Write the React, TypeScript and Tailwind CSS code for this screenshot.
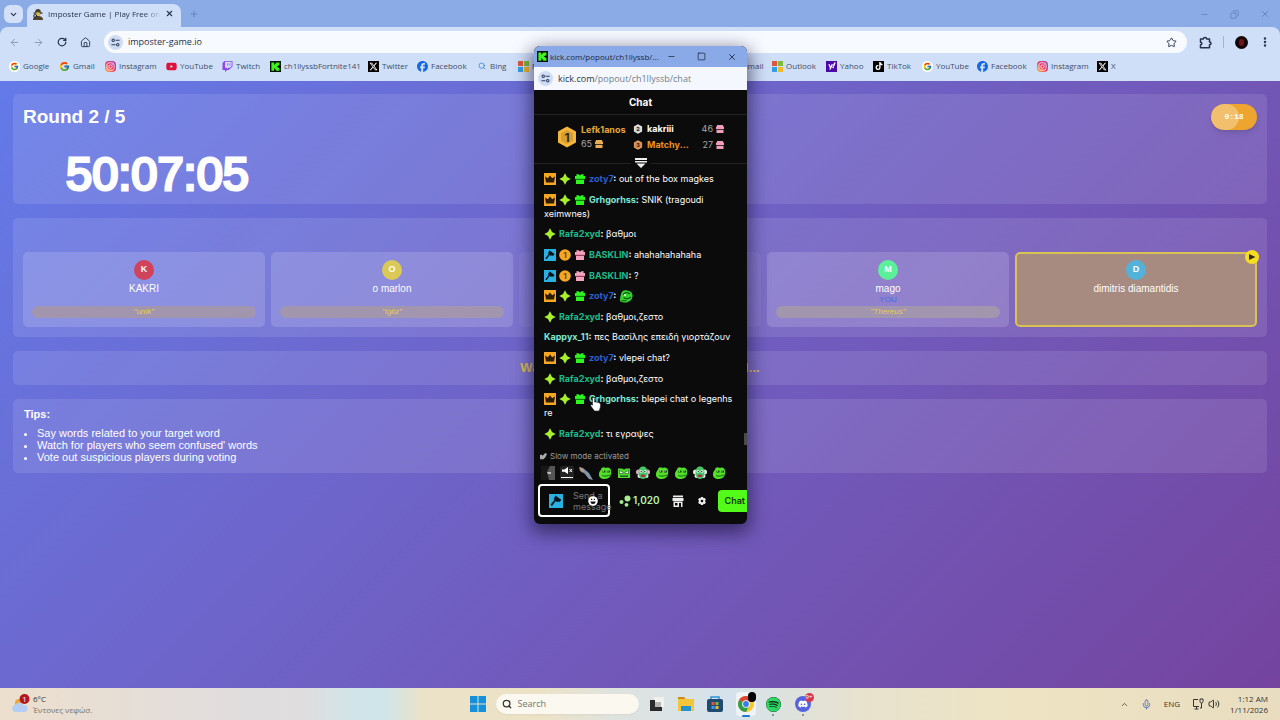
import type { ReactNode } from 'react';
import { ArrowLeft, ArrowRight, ChevronDown, ChevronUp, Copy, EllipsisVertical, House, Mic, Minus, Plus, RotateCw, Search, Square, Star, Volume2, X } from 'lucide-react';
import { FaDiscord, FaFacebook, FaInstagram, FaSpotify, FaTwitch, FaXTwitter, FaYahoo, FaTiktok, FaYoutube } from 'react-icons/fa6';
import { FcGoogle } from 'react-icons/fc';

/* Logos */
const KickLogo = () => (
  <svg viewBox="0 0 12 12" className="size-[11px] shrink-0">
    <rect width="12" height="12" fill="#061206" />
    <path d="M1.5 1.5h3v2.4h1V2.7h1.2V1.5h3.6v3H9v1H7.8v1H9v1h1.3v3H6.7V9.3H5.5V8.1h-1v2.4h-3z" fill="#3df51c" />
  </svg>
);

const MicrosoftLogo = () => (
  <svg viewBox="0 0 11 11" className="size-[11px] shrink-0">
    <path d="M0 0h5v5H0z" fill="#e2553b" />
    <path d="M6 0h5v5H6z" fill="#7fba3c" />
    <path d="M0 6h5v5H0z" fill="#2fa0e8" />
    <path d="M6 6h5v5H6z" fill="#f5b829" />
  </svg>
);

const GoogleLogo = () => (
  <span className="flex size-[11px] shrink-0 items-center justify-center rounded-full bg-white">
    <FcGoogle size={9} />
  </span>
);

const InstagramLogo = () => (
  <span className="flex size-[11px] shrink-0 items-center justify-center rounded-sm bg-linear-to-tr from-[#fdb236] via-[#e8305f] to-[#a02fc0] text-white">
    <FaInstagram size={9} />
  </span>
);

const DarkLogo = ({ children, color = 'bg-black' }: { children: ReactNode; color?: string }) => (
  <span className={`flex size-[11px] shrink-0 items-center justify-center text-white ${color}`}>{children}</span>
);

const TuneIcon = () => (
  <svg viewBox="0 0 12 12" className="size-[9px]" fill="none" stroke="#33425e" strokeWidth="1.4">
    <circle cx="3" cy="3" r="1.6" />
    <path d="M6 3h5.5M.5 9H6" />
    <circle cx="9" cy="9" r="1.6" />
  </svg>
);

const PuzzleIcon = () => (
  <svg viewBox="0 0 13 13" className="size-[13px]" fill="none" stroke="currentColor" strokeWidth="1.5" strokeLinejoin="round">
    <path d="M1.500 3h2.800c0-2 3.400-2 3.400 0h2.800v3c2 0 2 2.800 0 2.800v3h-9V8.800c1.700 0 1.700-2.600 0-2.600z" />
  </svg>
);

const DetectiveIcon = () => (
  <svg viewBox="0 0 12 12" className="size-3 shrink-0">
    <path d="M3 4.500C3 2 4.500 1 6 1s3 1 3 3.500z" fill="#473d2b" />
    <path d="M1.500 4.500h9v1.200h-9z" fill="#2f291e" />
    <circle cx="6" cy="6.500" r="2.200" fill="#e3b83b" />
    <path d="M1 12c0-3 2-4 5-4s5 1 5 4z" fill="#51442d" />
    <circle cx="3.200" cy="8" r="1.500" fill="none" stroke="#222" />
  </svg>
);

/* Bookmarks bar */
type Bookmark = { name: string; icon: ReactNode; width: string };

const leftBookmarks: Bookmark[] = [
  { name: 'Google', icon: <GoogleLogo />, width: 'w-[50px]' },
  { name: 'Gmail', icon: <FcGoogle size={11} className="shrink-0" />, width: 'w-[46px]' },
  { name: 'Instagram', icon: <InstagramLogo />, width: 'w-[61px]' },
  { name: 'YouTube', icon: <FaYoutube size={11} className="shrink-0 text-[#e0123a]" />, width: 'w-[56px]' },
  { name: 'Twitch', icon: <FaTwitch size={11} className="shrink-0 text-[#8b45e8]" />, width: 'w-[48px]' },
  { name: 'ch1llyssbFortnite141', icon: <KickLogo />, width: 'w-[98px]' },
  { name: 'Twitter', icon: <DarkLogo><FaXTwitter size={9} /></DarkLogo>, width: 'w-[49px]' },
  { name: 'Facebook', icon: <FaFacebook size={11} className="shrink-0 text-[#1768e5]" />, width: 'w-[60px]' },
  { name: 'Bing', icon: <Search size={8} className="mx-[1px] shrink-0 text-[#2b6fd0]" />, width: 'w-[41px]' },
  { name: 'Microsoft', icon: <MicrosoftLogo />, width: 'w-[58px]' },
];

const rightBookmarks: Bookmark[] = [
  { name: 'Hotmail', icon: <MicrosoftLogo />, width: 'w-[52px]' },
  { name: 'Outlook', icon: <MicrosoftLogo />, width: 'w-[54px]' },
  { name: 'Yahoo', icon: <DarkLogo color="bg-[#4a0aa8]"><FaYahoo size={8} /></DarkLogo>, width: 'w-[47px]' },
  { name: 'TikTok', icon: <DarkLogo><FaTiktok size={8} /></DarkLogo>, width: 'w-[49px]' },
  { name: 'YouTube', icon: <GoogleLogo />, width: 'w-[55px]' },
  { name: 'Facebook', icon: <FaFacebook size={11} className="shrink-0 text-[#1768e5]" />, width: 'w-[60px]' },
  { name: 'Instagram', icon: <InstagramLogo />, width: 'w-[60px]' },
  { name: 'X', icon: <DarkLogo><FaXTwitter size={9} /></DarkLogo>, width: 'w-[30px]' },
];

const BookmarkList = ({ items }: { items: Bookmark[] }) => (
  <div className="flex">
    {items.map((item) => (
      <a key={item.name} href="#" className={`flex shrink-0 items-center gap-[3px] whitespace-nowrap ${item.width}`}>
        {item.icon}
        {item.name}
      </a>
    ))}
  </div>
);

const BrowserHeader = () => (
  <header className="bg-[#8babe6] text-[#27324a]">
    <div className="flex h-[27px] items-end pl-1">
      <button aria-label="Search tabs" className="mb-1 flex h-[18px] w-[19px] items-center justify-center rounded-md bg-[#d3e0f8]">
        <ChevronDown size={9} strokeWidth={3} />
      </button>
      <div className="ml-1 flex h-[23px] w-[154px] items-center gap-1 rounded-t-lg bg-[#d0dff8] px-[5px] pb-1 text-[8px]">
        <DetectiveIcon />
        <span className="w-[113px] whitespace-nowrap mask-r-from-85%">Imposter Game | Play Free onli</span>
        <button aria-label="Close tab"><X size={9} strokeWidth={3} /></button>
      </div>
      <button aria-label="New tab" className="mb-2 ml-2 text-[#5c7db8]"><Plus size={10} /></button>
      <div className="mr-[10px] mb-2 ml-auto flex items-center gap-[21px] text-[#5f7fb6]">
        <button aria-label="Minimize"><Minus size={9} /></button>
        <button aria-label="Restore"><Copy size={9} className="-scale-x-100" /></button>
        <button aria-label="Close"><X size={10} /></button>
      </div>
    </div>
    <div className="rounded-t-lg bg-[#d0dff8] pt-1">
      <div className="flex items-center pr-[9px] pl-[9px]">
        <div className="flex w-[95px] items-center gap-[13px]">
          <button aria-label="Back"><ArrowLeft size={11} className="text-[#8795b2]" /></button>
          <button aria-label="Forward"><ArrowRight size={11} className="text-[#8795b2]" /></button>
          <button aria-label="Reload"><RotateCw size={10} strokeWidth={3} /></button>
          <button aria-label="Home"><House size={11} strokeWidth={2} /></button>
        </div>
        <div className="flex h-[22px] flex-1 items-center gap-[5px] rounded-full bg-[#f7faff] pr-[10px] pl-1">
          <span className="flex size-[15px] items-center justify-center rounded-full bg-[#cfdcf3]"><TuneIcon /></span>
          <input aria-label="Address" defaultValue="imposter-game.io" className="min-w-0 flex-1 bg-transparent text-[9px] outline-none" />
          <button aria-label="Bookmark"><Star size={11} /></button>
        </div>
        <button aria-label="Extensions" className="ml-3"><PuzzleIcon /></button>
        <span className="mx-[11px] h-3 w-px bg-[#a0b4da]" />
        <button aria-label="Profile" className="flex size-[13px] items-center justify-center rounded-full bg-[#120506]">
          <span className="h-[7px] w-[5px] rounded-full bg-[#6d1420]" />
        </button>
        <button aria-label="Menu" className="ml-[11px]"><EllipsisVertical size={12} strokeWidth={3} /></button>
      </div>
      <nav className="flex h-7 items-center pb-[2px] pl-[9px] text-[8px] text-[#414d66]">
        <BookmarkList items={leftBookmarks} />
        <div className="w-36 shrink" />
        <BookmarkList items={rightBookmarks} />
      </nav>
    </div>
  </header>
);

/* Game page */
type Player = { initial: string; name: string; color: string; word?: string; you?: boolean; active?: boolean };

const players: Player[] = [
  { initial: 'K', name: 'KAKRI', color: 'bg-[#d1435b]', word: '"unik"' },
  { initial: 'O', name: 'o marlon', color: 'bg-[#dac957]', word: '"igliz"' },
  { initial: '', name: '', color: 'bg-[#8a7fd0]' },
  { initial: 'M', name: 'mago', color: 'bg-[#5df09a]', word: '"Thereus"', you: true },
  { initial: 'D', name: 'dimitris diamantidis', color: 'bg-[#52b2da]', active: true },
];

const cardColor = (player: Player) => {
  if (player.active) return 'border-[#d8c155] bg-[#a78a80]';
  return player.name ? 'border-transparent bg-white/15' : 'border-transparent bg-white/5';
};

const PlayerCard = ({ player }: { player: Player }) => (
  <div className={`relative flex h-[75px] flex-col items-center rounded-[5px] border-2 px-[7px] pt-[6px] ${cardColor(player)}`}>
    <span className={`flex size-5 items-center justify-center rounded-full text-[9px] font-bold ${player.color}`}>{player.initial}</span>
    <span className="mt-[2px] text-[10px] leading-[14px]">{player.name}</span>
    <span className="h-[10px] text-[8px] leading-[8px] text-[#3f6be8]">{player.you && 'YOU'}</span>
    {player.word && <span className="h-3 w-full rounded-full bg-[#a196ae] text-center text-[8px] leading-[12px] text-[#e4cf48] italic">{player.word}</span>}
    {player.active && (
      <span className="absolute -top-1 -right-1 flex size-[14px] items-center justify-center rounded-full bg-[#f7dd21]">
        <svg viewBox="0 0 8 8" className="size-2"><path d="M1 1l6.500 3L1 7z" fill="#2e2a15" /></svg>
      </span>
    )}
  </div>
);

const Game = () => (
  <main className="flex flex-1 flex-col gap-[14px] bg-linear-135 from-[#637ae8] to-[#74449f] px-[13px] pt-[13px] font-['Liberation_Sans',sans-serif] text-white">
    <section className="flex h-[110px] items-start justify-between rounded-[5px] bg-white/10 p-[10px]">
      <div>
        <h1 className="text-[19px] leading-[25px] font-bold">Round 2 / 5</h1>
        <p className="mt-[15px] ml-[43px] text-[47px] leading-[60px] [-webkit-text-stroke:3px_white]">50:07:05</p>
      </div>
      <div className="relative flex h-[26px] w-[46px] items-center justify-center overflow-hidden rounded-full bg-[#eda52f] shadow-md">
        <span className="absolute inset-y-0 left-0 w-7 rounded-full bg-white/30" />
        <span className="relative font-['Liberation_Mono',monospace] text-[8px] font-bold">0:18</span>
      </div>
    </section>

    <section className="rounded-[5px] bg-white/10 px-[10px] pt-[34px] pb-[10px]">
      <div className="grid grid-cols-5 gap-[6px]">
        {players.map((player) => <PlayerCard key={player.color} player={player} />)}
      </div>
    </section>

    <section className="flex h-[34px] items-center justify-center rounded-[5px] bg-white/10 text-[13px] font-bold text-[#dcc04c]">
      Waiting for dimitris diamantidis word...
    </section>

    <section className="h-[74px] rounded-[5px] bg-white/10 px-[11px] pt-2 text-[11px]">
      <h2 className="leading-[14px] font-bold">Tips:</h2>
      <ul className="mt-[6px] list-disc pl-[13px] leading-[12px]">
        <li>Say words related to your target word</li>
        <li>Watch for players who seem confused' words</li>
        <li>Vote out suspicious players during voting</li>
      </ul>
    </section>
  </main>
);

/* Chat badges */
const CrownBadge = () => (
  <svg viewBox="0 0 12 12" className="size-3">
    <rect width="12" height="12" fill="#f5a623" />
    <path d="M1 3.500L3.800 5.300 6 2.500l2.200 2.800L11 3.500 10 9.500H2z" fill="#2b1a05" />
  </svg>
);

const StarBadge = () => (
  <svg viewBox="0 0 12 12" className="size-3">
    <path d="M6 .3l2 3.700L11.700 6 8 8 6 11.700 4 8 .3 6 4 4z" fill="#a8f02a" />
  </svg>
);

const GiftBadge = ({ color = '#2df51f', band = '#118c12' }: { color?: string; band?: string }) => (
  <svg viewBox="0 0 12 12" className="size-3">
    <path d="M2.500 1l2.500.5 1 1 1-1L9.500 1v2h1.500v3H1V3h1.500z" fill={color} />
    <path d="M2 6.800h8V11H2z" fill={color} />
    <path d="M1.500 5.800h9v1h-9z" fill={band} />
  </svg>
);

const ModBadge = () => (
  <svg viewBox="0 0 12 12" className="size-full">
    <rect width="12" height="12" fill="#2bb0e2" />
    <path d="M5.500 1.200l5 3.800-1.400 2-1.300-.8-.8.8L5.700 6 2.600 10.300 1.300 9.200 4.800 5l-.8-.7z" fill="#08141c" />
  </svg>
);

const CoinBadge = () => (
  <svg viewBox="0 0 12 12" className="size-3">
    <circle cx="6" cy="6" r="5.800" fill="#f5a623" />
    <text x="6" y="8.800" fontSize="8" fontWeight="700" textAnchor="middle" fill="#70420c">1</text>
  </svg>
);

const badgeIcons = {
  crown: <CrownBadge />,
  star: <StarBadge />,
  gift: <GiftBadge />,
  mod: <ModBadge />,
  coin: <CoinBadge />,
  pink: <GiftBadge color="#f3a3bd" band="#b5476b" />,
};

type Badge = keyof typeof badgeIcons;

const vip: Badge[] = ['crown', 'star', 'gift'];
const moderator: Badge[] = ['mod', 'coin', 'pink'];

/* Emotes */
const Frog = () => (
  <svg viewBox="0 0 14 14" className="size-[14px]">
    <path d="M3 3.500C3.500.8 6.500.8 7.500 2 10 .5 13.500 2 13.200 6c0 4-2.200 7-6.200 7-3.500.3-6-1.500-6-4.500C.8 6.500 2 5 3 3.500z" fill="#54e02a" />
    <path d="M4.500 4.500h3v2h-3zM9 4.500h3v2H9z" fill="#174f10" />
    <path d="M5 4.500h1v1H5zM9.500 4.500h1v1h-1z" fill="#f0fbe8" />
    <path d="M4 9.500c3 1 5 .8 8-.5" stroke="#1c7a16" strokeWidth="1.200" fill="none" />
  </svg>
);

const FrogBlock = () => (
  <svg viewBox="0 0 14 14" className="size-[14px]">
    <path d="M1 2.500h4l2 1 2-1h4V12H1z" fill="#4fd931" />
    <path d="M2.500 4.500L6 6v1.500H2.500zM11.500 4.500L8 6v1.500h3.500z" fill="#f0fbe8" stroke="#17521a" strokeWidth=".6" />
    <path d="M3 9.500h8v1.300H3z" fill="#154a15" />
  </svg>
);

const Clown = ({ hair = '#e8aacb' }: { hair?: string }) => (
  <svg viewBox="0 0 14 14" className="size-[14px]">
    <circle cx="2.500" cy="6" r="2.500" fill={hair} />
    <circle cx="11.500" cy="6" r="2.500" fill={hair} />
    <circle cx="3.500" cy="10" r="2" fill="#eef0ee" />
    <circle cx="10.500" cy="10" r="2" fill="#eef0ee" />
    <path d="M7 .5c3 0 4.500 2.500 4.500 6S10 13 7 13s-4.500-3-4.500-6.500S4 .5 7 .5z" fill="#47c765" />
    <ellipse cx="5" cy="5.500" rx="1.500" ry="1.200" fill="#fff" />
    <ellipse cx="9" cy="5.500" rx="1.500" ry="1.200" fill="#fff" />
    <circle cx="5.200" cy="5.600" r=".7" />
    <circle cx="8.800" cy="5.600" r=".7" />
    <ellipse cx="7" cy="9.800" rx="2.500" ry="1.300" fill="#b3264a" />
  </svg>
);

const FrogCup = () => (
  <svg viewBox="0 0 14 14" className="inline size-[14px] align-[-4px]">
    <path d="M2 5C3 1 6 1 8 1.500c4 .5 6 3 5.500 6C13 11 10 13.500 6 13.500 3 13.500.5 12.500 1 11c.2-2 .3-4 1-6z" fill="#35d32e" />
    <path d="M4 5.500c2-2 5-2 7-.5M4.500 8.500c2 1.500 5 1.500 7.500-.5M2.500 11.500c2 .5 3 .5 5-.3" stroke="#0c5c14" strokeWidth="1.200" fill="none" />
    <circle cx="6" cy="6" r="1" fill="#eafbe4" />
  </svg>
);

type Message = { user: string; color: string; badges: Badge[]; text: ReactNode };

const blue = 'text-[#2c5fd0]';
const teal = 'text-[#7ee8d2]';
const green = 'text-[#1cbc8c]';

const messages: Message[] = [
  { user: 'zoty7', color: blue, badges: vip, text: 'out of the box magkes' },
  { user: 'Grhgorhss', color: teal, badges: vip, text: 'SNIK (tragoudi xeimwnes)' },
  { user: 'Rafa2xyd', color: green, badges: ['star'], text: 'βαθμοι' },
  { user: 'BASKLIN', color: green, badges: moderator, text: 'ahahahahahaha' },
  { user: 'BASKLIN', color: green, badges: moderator, text: '?' },
  { user: 'zoty7', color: blue, badges: vip, text: <FrogCup /> },
  { user: 'Rafa2xyd', color: green, badges: ['star'], text: 'βαθμοι,ζεστο' },
  { user: 'Kappyx_11', color: teal, badges: [], text: 'πες Βασίλης επειδή γιορτάζουν' },
  { user: 'zoty7', color: blue, badges: vip, text: 'vlepei chat?' },
  { user: 'Rafa2xyd', color: green, badges: ['star'], text: 'βαθμοι,ζεστο' },
  { user: 'Grhgorhss', color: teal, badges: vip, text: 'blepei chat o legenhs re' },
  { user: 'Rafa2xyd', color: green, badges: ['star'], text: 'τι εγραψες' },
];

const Hexagon = ({ size, fill, label }: { size: string; fill: string; label: string }) => (
  <svg viewBox="0 0 20 22" className={`shrink-0 ${size}`}>
    <path d="M10 .5l9 5v11l-9 5-9-5v-11z" fill={fill} />
    <path d="M10 4l6 3.300v7.400L10 18l-6-3.300V7.300z" fill="#000" opacity=".12" />
    <text x="10" y="15.500" fontSize="12" fontWeight="700" textAnchor="middle" fill="#33291b">{label}</text>
  </svg>
);

const GiftCount = ({ count, color }: { count: number; color: string }) => (
  <span className="flex items-center gap-[3px] font-normal text-[#a7a7a7]">
    {count}
    <svg viewBox="0 0 8 8" className="size-2"><path d="M1 0h6v1.500h1V4H0V1.500h1zM.5 4.800h7V8h-7z" fill={color} /></svg>
  </span>
);

const Leaderboard = () => (
  <div className="flex h-11 items-center border-t border-[#222] pr-[23px] pl-[23px] text-[9px] leading-[14px] font-bold">
    <Hexagon size="h-[22px] w-5" fill="#f5b53a" label="1" />
    <div className="ml-[4px] w-[52px]">
      <div className="text-[#e5a83a]">Lefk1anos</div>
      <GiftCount count={65} color="#e8ad55" />
    </div>
    <div className="flex-1">
      <div className="flex items-center gap-1 leading-4">
        <Hexagon size="h-[10px] w-[10px]" fill="#e6e6e6" label="2" />
        <span className="flex-1">kakriii</span>
        <GiftCount count={46} color="#f09dbb" />
      </div>
      <div className="flex items-center gap-1 leading-4">
        <Hexagon size="h-[10px] w-[10px]" fill="#e89a5b" label="3" />
        <span className="flex-1 text-[#ee9220]">Matchy...</span>
        <GiftCount count={27} color="#f09dbb" />
      </div>
    </div>
  </div>
);

const ChatFooter = () => (
  <div className="overflow-hidden px-1 pb-[7px]">
    <div className="flex items-center gap-[3px] pl-[2px] text-[8px] leading-[14px] text-[#9b9b9b]">
      <svg viewBox="0 0 8 8" className="size-[7px]"><path d="M0 2h2l1 1 3-3 2 1-2 4-2 2H0z" fill="#aaa" /></svg>
      Slow mode activated
    </div>
    <div className="mt-[3px] flex gap-[5px] pl-[3px]">
      <svg viewBox="0 0 14 14" className="size-[14px]"><rect width="14" height="14" fill="#555" /><path d="M0 0h9L6 6l2 8H0z" fill="#171717" /><path d="M6 6h4v2H7z" fill="#bbb" /></svg>
      <svg viewBox="0 0 14 14" className="size-[14px]"><rect width="14" height="14" rx="2" fill="#222" /><path d="M2 3.500h2.500L8 1v7L4.500 5.800H2z" fill="#fff" /><path d="M9.500 3l2.500 3M12 3L9.500 6M1 11.500h12" stroke="#fff" /></svg>
      <svg viewBox="0 0 14 14" className="size-[14px]"><path d="M0 1l4 1 6 5 4 7-4-1-5-6-4-2z" fill="#8294a4" /><path d="M1 1l4 3-1 3-3-3z" fill="#b99a85" /></svg>
      <Frog /><FrogBlock /><Clown /><Frog /><Frog /><Clown hair="#eef0ee" /><Frog />
    </div>
    <div className="mt-1 flex h-[33px] items-center">
      <div className="relative flex h-full w-[72px] shrink-0 items-center rounded border-2 border-white pl-[9px]">
        <span className="size-[14px] shrink-0"><ModBadge /></span>
        <textarea aria-label="Send a message" rows={2} placeholder="Send a message" className="ml-[10px] w-[46px] shrink-0 resize-none overflow-hidden bg-transparent text-[9px] leading-[11px] outline-none placeholder:text-[#777]" />
        <button aria-label="Emotes" className="absolute top-[10px] left-12">
          <svg viewBox="0 0 10 10" className="size-[10px]"><circle cx="5" cy="5" r="4.800" fill="#fff" /><path d="M2.500 5.500h5a2.500 2.500 0 01-5 0M3 2.800h1.200V4H3zM5.800 2.800H7V4H5.800z" fill="#111" /></svg>
        </button>
      </div>
      <button className="ml-[9px] flex shrink-0 items-center gap-[2px] text-[10px] font-semibold text-[#b9f2a9]">
        <svg viewBox="0 0 12 12" className="size-3"><circle cx="8.500" cy="3.500" r="3" fill="#a5f08d" /><circle cx="2.500" cy="7" r="2" fill="#a5f08d" /><circle cx="7.500" cy="9.800" r="1.900" fill="#a5f08d" /></svg>
        1,020
      </button>
      <button aria-label="Shop" className="ml-3 shrink-0">
        <svg viewBox="0 0 12 12" className="size-3"><path d="M1 .5h10v1.800H1zM.5 3h11v3h-11zM1.500 6.500h9V12H9V8H7v4H1.500zM3 8v2.500h2.500V8z" fill="#eee" fillRule="evenodd" /></svg>
      </button>
      <button aria-label="Settings" className="ml-[13px] shrink-0">
        <svg viewBox="0 0 10 10" className="size-[10px]"><path d="M4 1h2l.5 1.200 1.300-.3 1 1.600L8 5l.8 1.500-1 1.600-1.300-.3L6 9H4l-.5-1.200-1.300.3-1-1.600L2 5l-.8-1.500 1-1.600 1.300.3zM5 3.700a1.300 1.300 0 100 2.600 1.300 1.300 0 000-2.600" fill="#eee" fillRule="evenodd" /></svg>
      </button>
      <button className="-mr-1 ml-[11px] h-[22px] flex-1 rounded-l-sm bg-[#53fc18] pl-[7px] text-left text-[9px] font-semibold whitespace-nowrap text-[#123608]">Chat</button>
    </div>
  </div>
);

const ChatPopup = () => (
  <aside className="absolute top-[46px] left-[534px] flex h-[478px] w-[213px] flex-col overflow-hidden rounded-md bg-[#0b0b0b] text-white shadow-[0_6px_18px_3px_rgba(20,15,50,0.6)]">
    <div className="flex h-[21px] shrink-0 items-center bg-[#89aae6] pr-[10px] pl-[3px] text-[8px] text-[#1d2840]">
      <KickLogo />
      <span className="ml-[2px] flex-1 whitespace-nowrap">kick.com/popout/ch1llyssb/...</span>
      <div className="flex gap-[21px]">
        <button aria-label="Minimize"><Minus size={9} /></button>
        <button aria-label="Maximize"><Square size={9} /></button>
        <button aria-label="Close"><X size={10} /></button>
      </div>
    </div>
    <div className="flex h-[23px] shrink-0 items-center gap-[5px] bg-[#f4f8fe] pl-1 text-[9px] text-[#2c3547]">
      <span className="flex size-[15px] items-center justify-center rounded-full bg-[#cfdcf3]"><TuneIcon /></span>
      <span>kick.com<span className="text-[#737c8c]">/popout/ch1llyssb/chat</span></span>
    </div>
    <div className="flex min-h-0 flex-1 flex-col font-[Inter,'Noto_Sans',sans-serif]">
      <h2 className="h-6 shrink-0 text-center text-[10px] leading-6 font-bold">Chat</h2>
      <Leaderboard />
      <div className="flex items-center">
        <span className="h-px flex-1 bg-[#222]" />
        <svg viewBox="0 0 12 10" className="mx-1 h-[10px] w-3"><path d="M0 0h12v2H0zM0 3h12v1.500H0zM1.500 5.500h9L6 10z" fill="#eee" /></svg>
        <span className="h-px flex-1 bg-[#222]" />
      </div>
      <div className="relative flex flex-1 flex-col justify-between pt-1 pr-[10px] pb-2 pl-[10px] text-[9px] leading-[14px]">
        {messages.map((message, i) => (
          <p key={i}>
            {message.badges.map((badge) => (
              <span key={badge} className="mr-[3px] inline-block size-3 align-[-3px]">{badgeIcons[badge]}</span>
            ))}
            <span className={`font-bold ${message.color}`}>{message.user}</span>
            <b>:</b> {message.text}
          </p>
        ))}
        <span className="absolute right-0 bottom-1 h-3 w-[3px] bg-[#4a4a4a]" />
      </div>
      <ChatFooter />
    </div>
  </aside>
);

const HandCursor = () => (
  <svg viewBox="0 0 12 15" className="pointer-events-none absolute top-[397px] left-[590px] h-[15px] w-3">
    <path d="M2.500 1.500c0-1.300 2-1.300 2 0V5c2 0 6 .5 6 2.500 0 3-.5 4-1.500 6.500H4.500L.8 9c-.5-1 .6-1.700 1.700-.8z" fill="#fff" stroke="#222" strokeWidth=".6" />
  </svg>
);

/* Windows taskbar */
const Taskbar = () => (
  <footer className="flex h-8 items-center bg-[linear-gradient(90deg,#ecdfcd_0%,#e0dddf_20%,#dfdede_24%,#cfe5ea_28%,#cfe5ea_30%,#ebe2c8_33%,#ece2c6_42%,#dfe3df_48%,#d5e2ec_57%,#e8e2ce_67%,#eee4c3_80%,#e8ddc0_100%)] text-[8px] text-[#37352f]">
    <button className="flex flex-1 items-center gap-[3px] pl-3 text-left">
      <svg viewBox="0 0 18 20" className="h-5 w-[18px]">
        <circle cx="7" cy="9" r="4" fill="#eda63a" />
        <path d="M4 18a3.500 3.500 0 01-.5-7 4.500 4.500 0 018 0 3.500 3.500 0 011 7z" fill="#b4cdf3" />
        <circle cx="12.500" cy="5" r="5" fill="#b4151b" />
        <text x="12.500" y="8" fontSize="8" textAnchor="middle" fill="#fff">1</text>
      </svg>
      <span className="leading-[11px]">6°C<br /><span className="text-[#77736a]">Έντονες νεφώσ.</span></span>
    </button>
    <div className="flex items-center">
      <button aria-label="Start" className="mr-[10px]">
        <svg viewBox="0 0 16 16" className="size-4"><path d="M0 0h7.500v7.500H0zM8.500 0H16v7.500H8.500zM0 8.500h7.500V16H0zM8.500 8.500H16V16H8.500z" fill="#1590dc" /></svg>
      </button>
      <label className="mr-[10px] flex h-5 w-[143px] items-center gap-[6px] rounded-full bg-[#faf8ef] px-[6px] shadow-xs">
        <Search size={10} strokeWidth={3} className="shrink-0" />
        <input aria-label="Search" placeholder="Search" className="w-full min-w-0 bg-transparent text-[9px] outline-none placeholder:text-[#77746c]" />
      </label>
      <button aria-label="Task view" className="mr-[13px]">
        <svg viewBox="0 0 16 16" className="size-4"><path d="M5 1h10v10H5z" fill="#f1f1ee" /><path d="M1 4h5v7h7v4H1z" fill="#2a2a2a" /><path d="M6 6h6v5H6z" fill="#b5b5b3" /></svg>
      </button>
      <button aria-label="File Explorer" className="mr-[13px]">
        <svg viewBox="0 0 16 16" className="size-4"><path d="M0 1h6l2 2h8v12H0z" fill="#f3c53b" /><path d="M0 1h6l1.500 2H0z" fill="#c98d1e" /><path d="M3 10h10v5H3z" fill="#2592c9" /></svg>
      </button>
      <button aria-label="Microsoft Store" className="mr-[13px]">
        <svg viewBox="0 0 16 16" className="size-4"><path d="M4 4V1h8v3" fill="none" stroke="#2c95d8" strokeWidth="1.500" /><rect y="3" width="16" height="13" rx="2" fill="#204b70" /><path d="M4.500 6h3v3h-3z" fill="#e2553b" /><path d="M8.500 6h3v3h-3z" fill="#7fba3c" /><path d="M4.500 10h3v3h-3z" fill="#2fa0e8" /><path d="M8.500 10h3v3h-3z" fill="#f5b829" /></svg>
      </button>
      <button aria-label="Chrome" className="relative mr-[10px] flex h-6 w-5 items-center justify-center rounded bg-white/60">
        <svg viewBox="0 0 16 16" className="size-4">
          <circle cx="8" cy="8" r="8" fill="#f7c729" />
          <path d="M8 8L1.100 4A8 8 0 0114.900 4z" fill="#dd4534" />
          <path d="M8 8L1.100 4A8 8 0 008 16l3-6z" fill="#2f9e51" />
          <circle cx="8" cy="8" r="3.800" fill="#fff" />
          <circle cx="8" cy="8" r="2.900" fill="#3b7de6" />
        </svg>
        <span className="absolute top-0 right-0 h-[10px] w-2 rounded-full bg-black" />
        <span className="absolute -bottom-px h-[2px] w-2 rounded bg-[#2277d0]" />
      </button>
      <button aria-label="Spotify" className="relative mr-[14px] flex justify-center">
        <FaSpotify size={15} className="rounded-full bg-[#10391f] text-[#2cd765]" />
        <span className="absolute -bottom-1 size-[2px] rounded bg-[#777]" />
      </button>
      <button aria-label="Discord" className="relative flex justify-center">
        <span className="flex size-4 items-center justify-center rounded-full bg-[#5563e0] text-white"><FaDiscord size={10} /></span>
        <span className="absolute -top-[3px] -right-[3px] flex size-[9px] items-center justify-center rounded-full bg-[#d8384f] text-[6px] text-white">9+</span>
        <span className="absolute -bottom-1 size-[2px] rounded bg-[#777]" />
      </button>
    </div>
    <div className="flex flex-1 items-center justify-end pr-3">
      <button aria-label="Hidden icons"><ChevronUp size={9} /></button>
      <button aria-label="Microphone" className="ml-3"><Mic size={11} className="text-[#5374b4]" /></button>
      <span className="ml-3">ENG</span>
      <button aria-label="Network" className="ml-3">
        <svg viewBox="0 0 12 12" className="size-3" fill="none" stroke="#37352f"><path d="M6 1.500H1.500v7H7M2.500 11h4M4.500 8.500V11M8 1v2.500a1.500 1.500 0 003 0V1zM9.500 5v5H8" /></svg>
      </button>
      <button aria-label="Volume" className="ml-[4px]"><Volume2 size={12} /></button>
      <span className="ml-[10px] text-right leading-[11px]">1:12 AM<br />1/11/2026</span>
    </div>
  </footer>
);

const App = () => {
  return (
    <div className="relative flex min-h-screen flex-col overflow-hidden font-['Open_Sans','Noto_Sans',sans-serif]">
      <BrowserHeader />
      <Game />
      <Taskbar />
      <ChatPopup />
      <HandCursor />
    </div>
  );
};

export default App;
